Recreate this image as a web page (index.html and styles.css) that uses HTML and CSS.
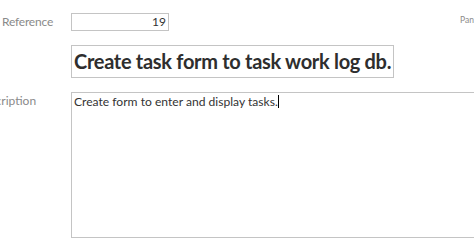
FILE: index.html
```html
<!DOCTYPE html>
<html>
<head>
<meta charset="utf-8">
<link rel="stylesheet" href="styles.css">
</head>
<body>
<div class="form">
  <div class="row row-ref">
    <span class="label label-ref">Reference</span>
    <div class="field num">19</div>
    <span class="pan">Pan</span>
  </div>
  <div class="row row-title">
    <div class="field title">Create task form to task work log db.</div>
  </div>
  <div class="row row-desc">
    <span class="label label-desc">Description</span>
    <div class="field memo">Create form to enter and display tasks.<span class="caret"></span></div>
  </div>
</div>
</body>
</html>
```
FILE: styles.css
```css
html, body {
  margin: 0;
  padding: 0;
  background: #ffffff;
  overflow: hidden;
}
body {
  width: 474px;
  height: 248px;
  font-family: Lato, "Open Sans", "Liberation Sans", sans-serif;
  color: #333333;
}
.form {
  display: flex;
  flex-direction: column;
  gap: 14px;
  padding-top: 13px;
}
.row {
  display: flex;
  align-items: flex-start;
}
.label {
  width: 71px;
  flex: none;
  font-size: 12px;
  color: #8a8a8a;
  white-space: nowrap;
  box-sizing: border-box;
}
.label-ref {
  padding-left: 2px;
  line-height: 18px;
  letter-spacing: -0.2px;
}
.label-desc {
  margin-left: -25px;
  width: 96px;
  padding-top: 2px;
  line-height: 14px;
}
.field {
  border: 1px solid #c4c4c4;
  box-sizing: border-box;
  background: #ffffff;
}
.num {
  width: 98px;
  height: 18px;
  font-size: 12px;
  line-height: 16px;
  text-align: right;
  padding-right: 2px;
  color: #333333;
}
.pan {
  margin-left: auto;
  margin-right: 0;
  font-size: 8.5px;
  color: #8a8a8a;
  line-height: 10px;
  padding-top: 2px;
}
.row-title {
  padding-left: 71px;
}
.title {
  width: 323px;
  height: 33px;
  font-size: 20px;
  font-weight: 700;
  letter-spacing: -0.3px;
  line-height: 31px;
  padding-left: 2px;
  color: #2e2e2e;
  white-space: nowrap;
}
.memo {
  width: 420px;
  height: 146px;
  flex: none;
  font-size: 12.1px;
  line-height: 14px;
  padding: 2px 2px;
  color: #333333;
}
.caret {
  display: inline-block;
  width: 1px;
  height: 13px;
  background: #000000;
  vertical-align: -2px;
}
```
